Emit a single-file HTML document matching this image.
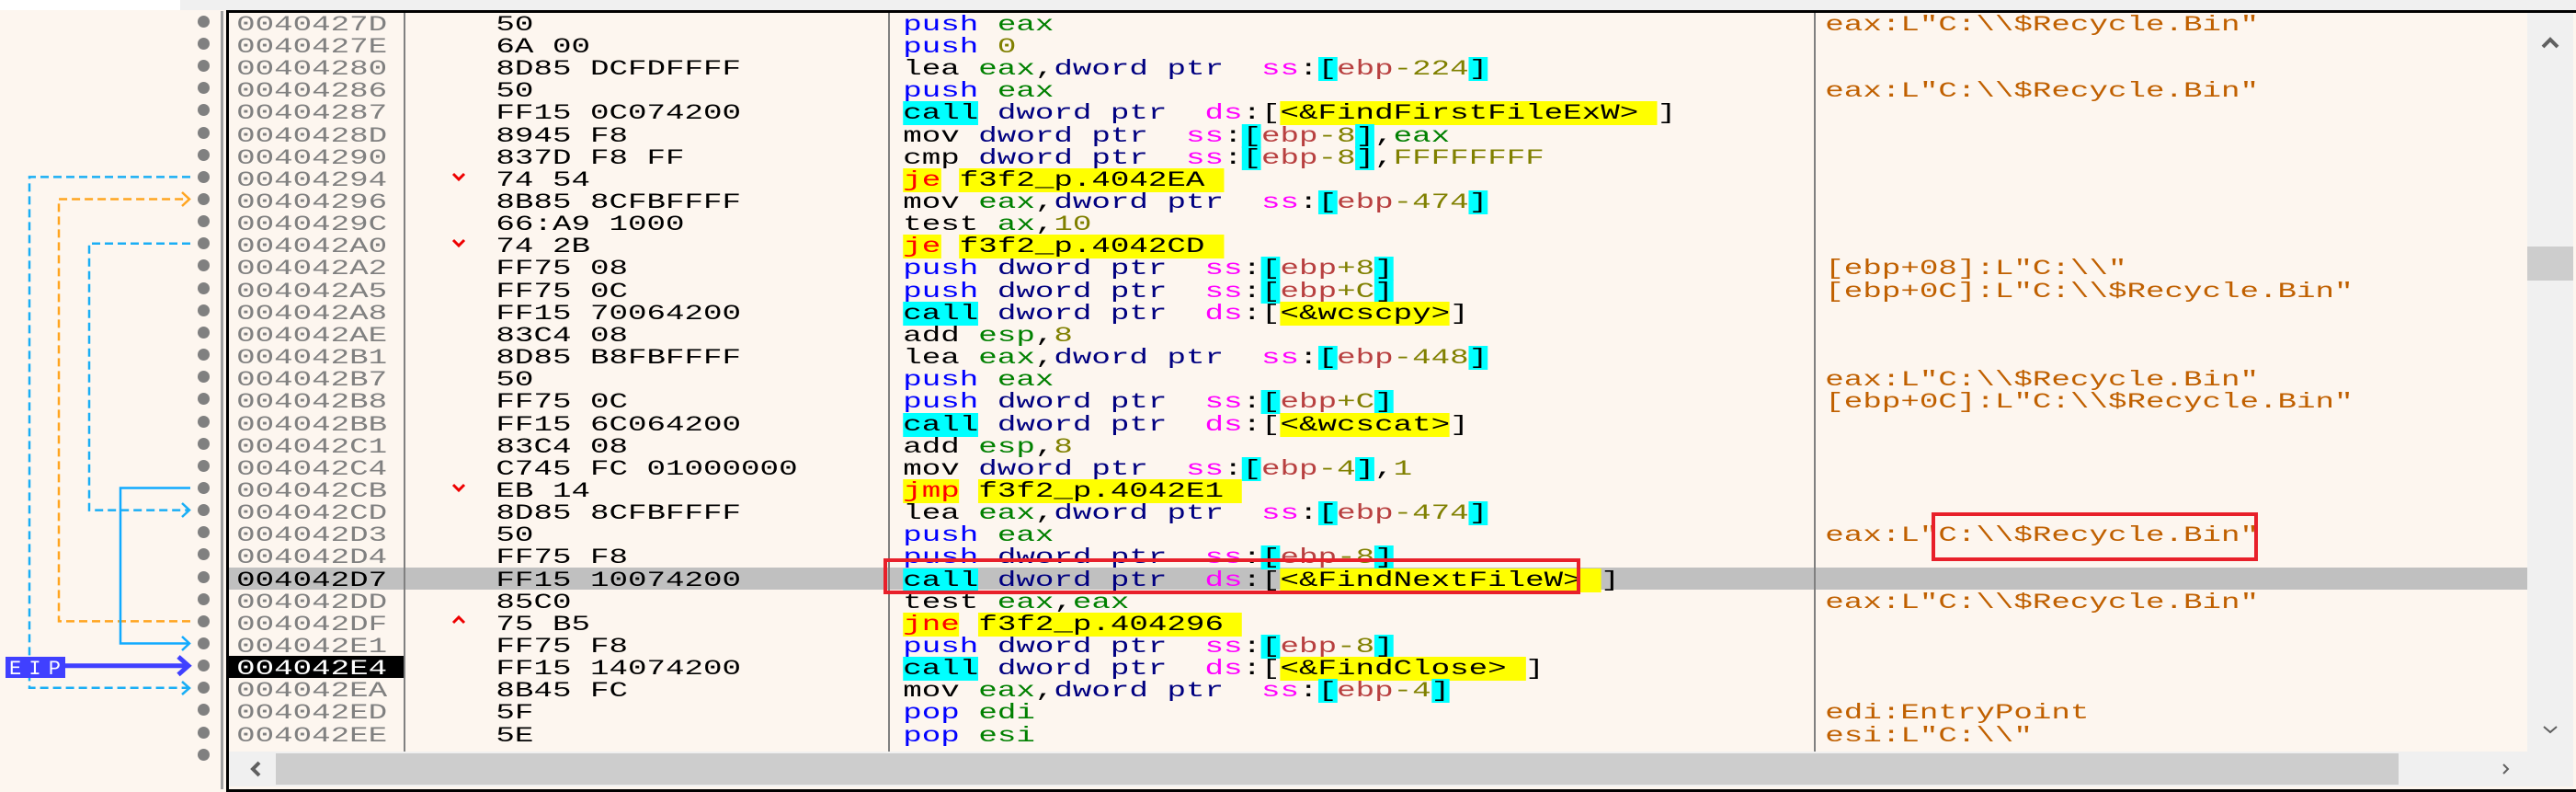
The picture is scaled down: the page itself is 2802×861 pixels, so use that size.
<!DOCTYPE html>
<html><head><meta charset="utf-8"><style>
html,body{margin:0;padding:0}
body{width:2802px;height:858px;position:relative;overflow:hidden;background:#fdf6ef;font-family:"Liberation Mono",monospace;font-size:23px}
.top{position:absolute;left:0;top:0;width:2802px;height:11px;background:#f0f0f0}
.topw{position:absolute;left:0;top:0;width:196px;height:11px;background:#fff}
.lp{position:absolute;left:0;top:12px;width:240px;height:846px;background:#fdf6ef;border-right:3px solid #a0a0a0}
.dump{position:absolute;left:246px;top:11px;width:2553px;height:844px;border:3px solid #000;border-right:2px solid #888;background:#fdf6ef;overflow:hidden}
.row{position:absolute;left:0;height:24px;line-height:25px;white-space:pre;transform:scaleX(1.486);transform-origin:0 0}
.a{color:#808080;position:absolute;left:173px}
.b{color:#000;position:absolute;left:363px}
.d{position:absolute;left:661px}
.c{position:absolute;left:1336px;color:#c06000}
.sep{position:absolute;top:14px;width:2px;height:803px;background:#808080}
.pu{color:#0000ff}.r{color:#008000}.n{color:#808000}.p{color:#000080}.sg{color:#ff00ff}.eb{color:#b84040}
.k{background:#00ffff}.y{background:#ffff00;color:#000}.j{background:#ffff00;color:#ff0000}
.hl{position:absolute;left:249px;width:2500px;height:24px;background:#c0c0c0}
.dot{position:absolute;left:215px;width:13px;height:13px;border-radius:50%;background:#808080}
</style></head><body>
<div class="top"></div><div class="topw"></div>
<div class="lp"></div>
<div class="dump"></div>
<div class="hl" style="top:617px"></div>
<div style="position:absolute;left:249px;top:713px;width:191px;height:24px;background:#000"></div>
<div class="sep" style="left:439px"></div>
<div class="sep" style="left:966px"></div>
<div class="sep" style="left:1973px"></div>
<div style="position:absolute;left:2749px;top:14px;width:50px;height:803px;background:#f0f0f0"></div>
<div style="position:absolute;left:2749px;top:268px;width:50px;height:37px;background:#cdcdcd"></div>
<svg style="position:absolute;left:2749px;top:14px" width="50" height="803"><path d="M17 37l8-8 8 8" stroke="#606060" stroke-width="4" fill="none"/><path d="M18 776l7 6 7-6" stroke="#606060" stroke-width="2" fill="none"/></svg>
<div style="position:absolute;left:249px;top:817px;width:2550px;height:38px;background:#f0f0f0"></div>
<div style="position:absolute;left:300px;top:819px;width:2309px;height:34px;background:#cdcdcd"></div>
<svg style="position:absolute;left:249px;top:817px" width="2500" height="38"><path d="M33 12l-7 7 7 7" stroke="#606060" stroke-width="4" fill="none"/><path d="M2474 14l5 5-5 5" stroke="#606060" stroke-width="2" fill="none"/></svg>
<svg style="position:absolute;left:0;top:0" width="520" height="858">
<g fill="none" stroke-width="2.5">
<path d="M207 192.4H32V747.8H205" stroke="#1aaef5" stroke-dasharray="9,5"/>
<path d="M198 741l8 7-8 7" stroke="#1aaef5"/>
<path d="M207 675.4H64V216.5H205" stroke="#ffa520" stroke-dasharray="9,5"/>
<path d="M198 209l8 7.5-8 7.5" stroke="#ffa520"/>
<path d="M207 264.8H97V554.6H205" stroke="#1aaef5" stroke-dasharray="9,5"/>
<path d="M198 547l8 7.5-8 7.5" stroke="#1aaef5"/>
<path d="M207 530.5H131V699.5H205" stroke="#10aaff"/>
<path d="M198 692l8 7.5-8 7.5" stroke="#10aaff"/>
<path d="M70 723.7H205" stroke="#4040ff" stroke-width="5"/>
<path d="M194 714l11 9.7-11 9.7" stroke="#4040ff" stroke-width="5"/>
<g stroke="#ee0000" stroke-width="3">
<path d="M493 189l6 6 6-6"/><path d="M493 261l6 6 6-6"/><path d="M493 527l6 6 6-6"/><path d="M493 677l6-6 6 6"/>
</g>
</g>
<rect x="6" y="714" width="65" height="23" fill="#4040ff"/>
<text x="10" y="733" fill="#fff" font-family="Liberation Mono" font-size="22" textLength="56">EIP</text>
</svg>
<div id="rows"></div>
<div style="position:absolute;left:961px;top:607px;width:750px;height:31px;border:4px solid #e8202a"></div>
<div style="position:absolute;left:2101px;top:557px;width:347px;height:45px;border:4px solid #e8202a"></div>
<script>
var A="0040427D 0040427E 00404280 00404286 00404287 0040428D 00404290 00404294 00404296 0040429C 004042A0 004042A2 004042A5 004042A8 004042AE 004042B1 004042B7 004042B8 004042BB 004042C1 004042C4 004042CB 004042CD 004042D3 004042D4 004042D7 004042DD 004042DF 004042E1 004042E4 004042EA 004042ED 004042EE 004042EF".split(" ");
var B=["50","6A 00","8D85 DCFDFFFF","50","FF15 0C074200","8945 F8","837D F8 FF","74 54","8B85 8CFBFFFF","66:A9 1000","74 2B","FF75 08","FF75 0C","FF15 70064200","83C4 08","8D85 B8FBFFFF","50","FF75 0C","FF15 6C064200","83C4 08","C745 FC 01000000","EB 14","8D85 8CFBFFFF","50","FF75 F8","FF15 10074200","85C0","75 B5","FF75 F8","FF15 14074200","8B45 FC","5F","5E","5B"];
function S(x){return '<span class="sg">ss</span>:<span class="k">[</span><span class="eb">ebp</span><span class="n">'+x+'</span><span class="k">]</span>';}
var P='<span class="p">dword ptr</span>  ';
function C(t){return '<span class="k">call</span> '+P+'<span class="sg">ds</span>:[<span class="y">'+t+'</span>]';}
function J(m,t){return '<span class="j">'+m+'</span> <span class="y">f3f2_p.'+t+' </span>';}
var pe='<span class="pu">push</span> <span class="r">eax</span>';
var D=[pe,'<span class="pu">push</span> <span class="n">0</span>',
'lea <span class="r">eax</span>,'+P+S('-224'),pe,C('&lt;&amp;FindFirstFileExW&gt; '),
'mov '+P+S('-8')+',<span class="r">eax</span>','cmp '+P+S('-8')+',<span class="n">FFFFFFFF</span>',
J('je','4042EA'),'mov <span class="r">eax</span>,'+P+S('-474'),'test <span class="r">ax</span>,<span class="n">10</span>',J('je','4042CD'),
'<span class="pu">push</span> '+P+S('+8'),'<span class="pu">push</span> '+P+S('+C'),C('&lt;&amp;wcscpy&gt;'),
'add <span class="r">esp</span>,<span class="n">8</span>','lea <span class="r">eax</span>,'+P+S('-448'),pe,'<span class="pu">push</span> '+P+S('+C'),C('&lt;&amp;wcscat&gt;'),
'add <span class="r">esp</span>,<span class="n">8</span>','mov '+P+S('-4')+',<span class="n">1</span>',J('jmp','4042E1'),
'lea <span class="r">eax</span>,'+P+S('-474'),pe,'<span class="pu">push</span> '+P+S('-8'),C('&lt;&amp;FindNextFileW&gt; '),
'test <span class="r">eax</span>,<span class="r">eax</span>',J('jne','404296'),'<span class="pu">push</span> '+P+S('-8'),C('&lt;&amp;FindClose&gt; '),
'mov <span class="r">eax</span>,'+P+S('-4'),'<span class="pu">pop</span> <span class="r">edi</span>','<span class="pu">pop</span> <span class="r">esi</span>','<span class="pu">pop</span> <span class="r">ebx</span>'];
var R='eax:L"C:\\\\$Recycle.Bin"';
var CM={0:R,3:R,11:'[ebp+08]:L"C:\\\\"',12:'[ebp+0C]:L"C:\\\\$Recycle.Bin"',16:R,17:'[ebp+0C]:L"C:\\\\$Recycle.Bin"',23:R,26:R,31:'edi:EntryPoint',32:'esi:L"C:\\\\"'};
var h='';
for(var i=0;i<34;i++){var t=11.3+i*24.15;
h+='<div class="dot" style="top:'+(t+5.5)+'px"></div>';
if(i==33)break;
var ac=i==25?'color:#000':(i==29?'color:#fff':'');
h+='<div class="row" style="top:'+(t+3.5)+'px"><span class="a" style="'+ac+'">'+A[i]+'</span><span class="b">'+B[i]+'</span><span class="d">'+D[i]+'</span>'+(CM[i]?'<span class="c">'+CM[i].replace(/&/g,'&amp;')+'</span>':'')+'</div>';}
document.getElementById('rows').innerHTML=h;
</script>
</body></html>
